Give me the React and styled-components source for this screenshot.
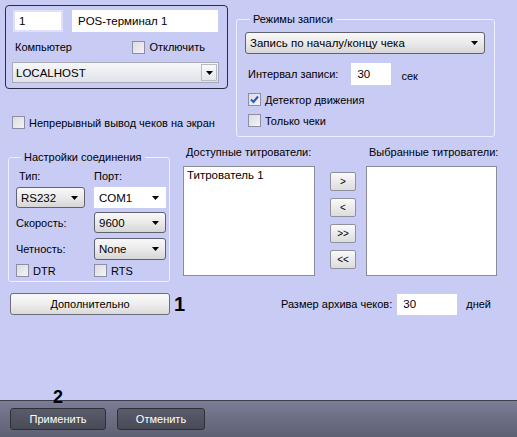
import React from "react"
import styled, { createGlobalStyle, css } from "styled-components"

const GlobalStyle = createGlobalStyle`
  html, body {
    margin: 0;
    padding: 0;
    background: #c8cbf4;
  }
  body {
    font-family: "Liberation Sans", Arial, sans-serif;
    font-size: 11px;
    color: #000;
  }
`

const Window = styled.div`
  width: 517px;
  height: 437px;
  display: flex;
  flex-direction: column;
  background: #c8cbf4;
  overflow: hidden;
`

const Content = styled.div`
  flex: 1;
  display: flex;
  flex-direction: column;
  padding: 5px 0 0 5px;
  position: relative;
`

const TopRow = styled.div`
  display: flex;
  gap: 8px;
`

const LeftColumn = styled.div`
  width: 223px;
  display: flex;
  flex-direction: column;
`

const ObjectPanel = styled.div`
  box-sizing: border-box;
  width: 223px;
  height: 84px;
  border: 1px solid #2c2c3c;
  border-radius: 4px;
  padding: 4px 8px 0 7px;
  display: flex;
  flex-direction: column;
`

const FieldRow = styled.div`
  display: flex;
  gap: 9px;
`

const TextField = styled.div`
  box-sizing: border-box;
  width: ${(p) => p.$w}px;
  height: ${(p) => p.$h || 22}px;
  background: #fff;
  border: 2px solid ${(p) => (p.$soft ? "#dfe1fa" : "#fff")};
  padding: 0 4px;
  display: flex;
  align-items: center;
  white-space: nowrap;
  font-size: 11.5px;
`

const LabelRow = styled.div`
  display: flex;
  justify-content: space-between;
  align-items: center;
  height: 30px;
  padding: 0 2px 0 2px;
`

const Label = styled.span`
  white-space: nowrap;
`

const CheckLabel = styled.label`
  display: flex;
  align-items: center;
  gap: 4px;
  white-space: nowrap;
  margin: ${(p) => p.$m || "0"};
`

const Box = styled.span`
  box-sizing: border-box;
  width: 13px;
  height: 13px;
  border: 1px solid #8c8ea4;
  background: linear-gradient(135deg, #dcdce0 0%, #f4f4f6 100%);
  display: inline-flex;
  align-items: center;
  justify-content: center;
  flex: none;
`

const Checkbox = ({ checked, children, m }) => (
  <CheckLabel $m={m}>
    <Box>
      {checked && (
        <svg width="9" height="9" viewBox="0 0 9 9">
          <path d="M1 4.5 L3.5 7 L8 1.5" fill="none" stroke="#2456c8" strokeWidth="2" />
        </svg>
      )}
    </Box>
    {children}
  </CheckLabel>
)

const HostCombo = styled.div`
  box-sizing: border-box;
  width: 207px;
  height: 21px;
  margin-left: -1px;
  border: 1px solid #a8aab8;
  background: linear-gradient(#f6f7f8, #dfe3e8);
  display: flex;
  align-items: center;
  padding-left: 3px;
  font-size: 11.5px;
`

const HostText = styled.span`
  flex: 1;
`

const HostButton = styled.span`
  box-sizing: border-box;
  width: 16px;
  height: 17px;
  margin-right: 1px;
  border: 1px solid #b8bac8;
  background: linear-gradient(#fafafa, #e4e6ea);
  display: flex;
  align-items: center;
  justify-content: center;
`

const Arrow = () => (
  <svg width="7" height="4" viewBox="0 0 7 4">
    <path d="M0 0 H7 L3.5 4 Z" fill="#000" />
  </svg>
)

const Group = styled.fieldset`
  box-sizing: border-box;
  margin: ${(p) => p.$m || 0};
  border: 1px solid #eef0ff;
  border-radius: 3px;
  width: ${(p) => p.$w}px;
  height: ${(p) => p.$h}px;
  padding: ${(p) => p.$pad};
  display: flex;
  flex-direction: column;
  min-width: 0;
`

const Legend = styled.legend`
  padding: 0 3px;
  margin-left: 5px;
  line-height: 14px;
`

const roundCombo = css`
  box-sizing: border-box;
  border: 1px solid #606270;
  border-radius: 3px;
  background: linear-gradient(#f8f8f8 0%, #eaeaea 50%, #d6d6d8 100%);
`

const Combo = styled.div`
  ${(p) =>
    p.$plain
      ? css`
          box-sizing: border-box;
          background: #fff;
          border: 1px solid #fff;
        `
      : roundCombo}
  width: ${(p) => p.$w}px;
  height: ${(p) => p.$h || 21}px;
  display: flex;
  align-items: center;
  justify-content: space-between;
  padding: 0 6px 0 4px;
  white-space: nowrap;
  font-size: 11.5px;
`

const ModeBody = styled.div`
  display: flex;
  flex-direction: column;
`

const IntervalRow = styled.div`
  display: flex;
  align-items: center;
  height: 22px;
  margin: 9px 0 3px 3px;
`

const Unit = styled.span`
  margin-left: 10px;
  margin-top: 3px;
`

const Stack = styled.div`
  display: flex;
  flex-direction: column;
  gap: 8px;
  margin: 5px 0 0 3px;
`

const MiddleRow = styled.div`
  display: flex;
  margin-top: 13px;
  margin-left: 3px;
`

const ConnGrid = styled.div`
  display: grid;
  grid-template-columns: 78px 72px;
  grid-auto-rows: auto;
  align-items: center;
`

const ListColumn = styled.div`
  display: flex;
  flex-direction: column;
  width: ${(p) => p.$w}px;
  margin-left: ${(p) => p.$ml}px;
`

const ListTitle = styled.div`
  height: 14px;
  line-height: 14px;
  margin: -5px 0 0 3px;
  white-space: nowrap;
`

const ListBox = styled.div`
  box-sizing: border-box;
  width: ${(p) => p.$w}px;
  height: 110px;
  margin-top: 7px;
  background: #fff;
  border: 1px solid #8a8c9c;
  padding: 2px 3px;
  font-size: 11.5px;
`

const ArrowColumn = styled.div`
  display: flex;
  flex-direction: column;
  gap: 7px;
  margin: 22px 0 0 15px;
`

const SmallButton = styled.button`
  box-sizing: border-box;
  width: 26px;
  height: 19px;
  padding: 0;
  border: 1px solid #8e909c;
  border-radius: 2px;
  background: linear-gradient(#fafafa, #dcdcde);
  font: inherit;
  font-size: 10px;
  color: #000;
`

const BottomRow = styled.div`
  display: flex;
  align-items: center;
  margin-top: 11px;
  margin-left: 5px;
`

const WideButton = styled.button`
  box-sizing: border-box;
  width: 160px;
  height: 22px;
  padding: 0;
  border: 1px solid #6c6e7c;
  border-radius: 3px;
  background: linear-gradient(#fafafa 0%, #eeeeee 50%, #dadadc 100%);
  font: inherit;
  color: #000;
`

const Marker = styled.span`
  font-weight: bold;
  font-size: 20px;
  line-height: 20px;
  margin-left: ${(p) => p.$ml || 0}px;
`

const ArchiveRow = styled.div`
  display: flex;
  align-items: center;
  margin-left: auto;
  margin-right: 26px;
`

const StepMarker = styled(Marker)`
  position: absolute;
  left: 53px;
  bottom: -4px;
  font-size: 18px;
  line-height: 14px;
`

const Footer = styled.div`
  height: 36px;
  border-top: 1px solid #3c3e4c;
  background: linear-gradient(#7a7d94, #5e6074);
  display: flex;
  align-items: center;
  gap: 11px;
  padding-left: 10px;
`

const DarkButton = styled.button`
  box-sizing: border-box;
  width: ${(p) => p.$w}px;
  height: 22px;
  padding: 0;
  border: 1px solid #2e3038;
  border-radius: 3px;
  background: linear-gradient(#5a5c6a, #484a56);
  color: #fff;
  font: inherit;
`

export default function App() {
  return (
    <Window>
      <GlobalStyle />
      <Content>
        <TopRow>
          <LeftColumn>
            <ObjectPanel>
              <FieldRow>
                <TextField $w={50} $soft>1</TextField>
                <TextField $w={146}>POS-терминал 1</TextField>
              </FieldRow>
              <LabelRow>
                <Label>Компьютер</Label>
                <Checkbox m="0 12px 0 0">Отключить</Checkbox>
              </LabelRow>
              <HostCombo>
                <HostText>LOCALHOST</HostText>
                <HostButton>
                  <Arrow />
                </HostButton>
              </HostCombo>
            </ObjectPanel>
            <Checkbox m="27px 0 0 7px">Непрерывный вывод чеков на экран</Checkbox>
          </LeftColumn>
          <Group $w={259} $h={125} $pad="6px 9px 0 8px" $m="7px 0 0 0">
            <Legend>Режимы записи</Legend>
            <ModeBody>
              <Combo $w={240} $h={22}>
                Запись по началу/концу чека
                <Arrow />
              </Combo>
              <IntervalRow>
                <Label>Интервал записи:</Label>
                <TextField $w={40} style={{ marginLeft: 13 }}>30</TextField>
                <Unit>сек</Unit>
              </IntervalRow>
              <Stack>
                <Checkbox checked>Детектор движения</Checkbox>
                <Checkbox>Только чеки</Checkbox>
              </Stack>
            </ModeBody>
          </Group>
        </TopRow>

        <MiddleRow>
          <Group $w={162} $h={132} $pad="1px 5px 0 7px">
            <Legend>Настройки соединения</Legend>
            <ConnGrid>
              <Label style={{ marginLeft: 3, height: 22, lineHeight: "22px" }}>Тип:</Label>
              <Label style={{ height: 22, lineHeight: "22px" }}>Порт:</Label>
              <Combo $w={69} $h={21}>
                RS232
                <Arrow />
              </Combo>
              <Combo $w={72} $h={21} $plain>
                COM1
                <Arrow />
              </Combo>
              <Label style={{ marginTop: 4 }}>Скорость:</Label>
              <Combo $w={72} $h={21} style={{ marginTop: 4 }}>
                9600
                <Arrow />
              </Combo>
              <Label style={{ marginTop: 5 }}>Четность:</Label>
              <Combo $w={72} $h={22} style={{ marginTop: 5 }}>
                None
                <Arrow />
              </Combo>
              <Checkbox m="4px 0 0 0">DTR</Checkbox>
              <Checkbox m="4px 0 0 0">RTS</Checkbox>
            </ConnGrid>
          </Group>
          <ListColumn $w={132} $ml={13}>
            <ListTitle>Доступные титрователи:</ListTitle>
            <ListBox $w={132}>Титрователь 1</ListBox>
          </ListColumn>
          <ArrowColumn>
            <SmallButton>&gt;</SmallButton>
            <SmallButton>&lt;</SmallButton>
            <SmallButton>&gt;&gt;</SmallButton>
            <SmallButton>&lt;&lt;</SmallButton>
          </ArrowColumn>
          <ListColumn $w={131} $ml={10}>
            <ListTitle>Выбранные титрователи:</ListTitle>
            <ListBox $w={131} />
          </ListColumn>
        </MiddleRow>

        <BottomRow>
          <WideButton>Дополнительно</WideButton>
          <Marker $ml={4}>1</Marker>
          <ArchiveRow>
            <Label>Размер архива чеков:</Label>
            <TextField $w={60} $h={21} style={{ marginLeft: 5 }}>30</TextField>
            <Label style={{ marginLeft: 9 }}>дней</Label>
          </ArchiveRow>
        </BottomRow>
        <StepMarker>2</StepMarker>
      </Content>
      <Footer>
        <DarkButton $w={96}>Применить</DarkButton>
        <DarkButton $w={88}>Отменить</DarkButton>
      </Footer>
    </Window>
  )
}
